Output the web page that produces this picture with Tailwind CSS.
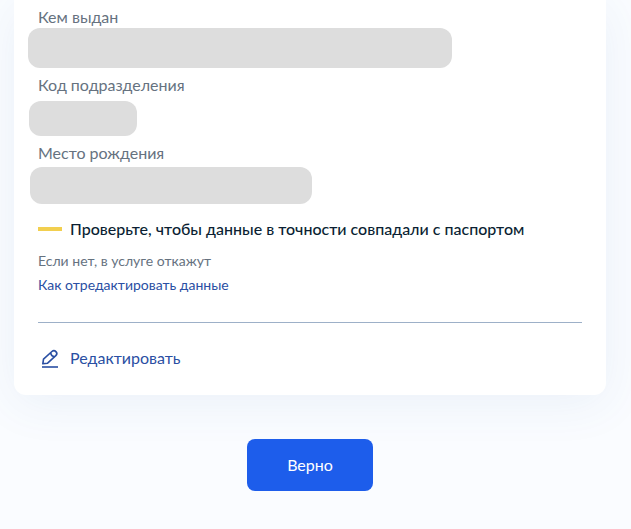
<!DOCTYPE html>
<html lang="ru">
<head>
    <meta charset="UTF-8">
    <meta name="viewport" content="width=device-width, initial-scale=1.0">
    <title>Проверка паспортных данных</title>
    <script src="https://cdn.jsdelivr.net/npm/@tailwindcss/browser@4"></script>
</head>
<body class="bg-[#fafcff] min-h-screen font-['Lato',sans-serif] text-base text-[#0b1f33]">
    <main class="pl-[14px] pr-[25px]">
        <!-- Passport data card -->
        <section class="bg-white rounded-b-xl px-6 pt-2 pb-[25px] shadow-[0_8px_48px_rgba(52,100,170,0.08)]">
            <dl class="space-y-2 leading-[18px]">
                <div>
                    <dt class="text-[#66727f]">Кем выдан</dt>
                    <dd class="-ml-[10px] mt-[2px] w-[424px] max-w-full h-10 rounded-xl bg-[#dddddd]"></dd>
                </div>
                <div>
                    <dt class="text-[#66727f]">Код подразделения</dt>
                    <dd class="-ml-[9px] mt-[7px] w-[108px] h-[35px] rounded-xl bg-[#dddddd]"></dd>
                </div>
                <div>
                    <dt class="text-[#66727f]">Место рождения</dt>
                    <dd class="-ml-2 mt-[5px] w-[282px] max-w-full h-[37px] rounded-xl bg-[#dddddd]"></dd>
                </div>
            </dl>

            <!-- Warning -->
            <div class="mt-[13px]">
                <h2 class="flex items-center gap-2 font-medium leading-6">
                    <span class="w-6 h-1 shrink-0 bg-[#f2cf4f]"></span>
                    Проверьте, чтобы данные в точности совпадали с паспортом
                </h2>
                <p class="mt-2 text-sm leading-6 text-[#66727f]">Если нет, в услуге откажут</p>
                <a href="#" class="block w-fit text-sm leading-6 text-[#2a4fa3]">Как отредактировать данные</a>
            </div>

            <hr class="mt-[25px] border-t border-[#9db0c8]">

            <button type="button" class="mt-[23px] flex items-center gap-2 leading-6 text-[#2a4fa3]">
                <svg class="w-6 h-6" viewBox="0 0 24 24" fill="none" stroke="currentColor" stroke-width="1.6" stroke-linejoin="round" aria-hidden="true">
                    <path d="M4.8 17.8l.7-4.6 8.4-7.7a2.9 2.9 0 0 1 4 .1 2.9 2.9 0 0 1-.1 4.1l-8.2 7.5z"/>
                    <path d="M12.6 6.8c.4 2.2 1.7 3.6 3.9 4"/>
                    <path d="M4 21h16"/>
                </svg>
                Редактировать
            </button>
        </section>

        <div class="mt-11 flex justify-center">
            <button type="submit" class="h-[52px] px-10 rounded-lg bg-[#1d5deb] text-white leading-6">Верно</button>
        </div>
    </main>
</body>
</html>
